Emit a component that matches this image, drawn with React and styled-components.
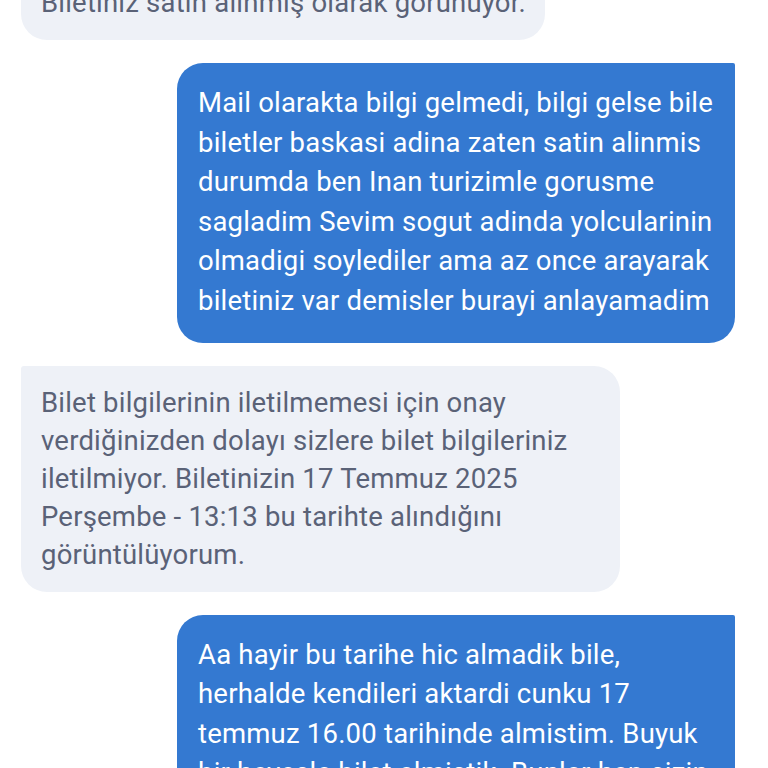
import React from "react";
import styled, { createGlobalStyle, css } from "styled-components";

const Global = createGlobalStyle`
  html, body { margin: 0; padding: 0; background: #ffffff; }
  body { font-family: Roboto, "Noto Sans", "Liberation Sans", sans-serif; overflow: hidden; }
  * { box-sizing: border-box; }
`;

const Screen = styled.div`
  width: 768px;
  height: 768px;
  overflow: hidden;
  background: #ffffff;
`;

const Thread = styled.div`
  display: flex;
  flex-direction: column;
  gap: 23px;
  margin-top: -34px;
`;

const Row = styled.div`
  display: flex;
  justify-content: ${(p) => (p.$mine ? "flex-end" : "flex-start")};
  padding: ${(p) => (p.$mine ? "0 33px 0 0" : "0 0 0 21px")};
`;

const Bubble = styled.div`
  width: ${(p) => p.$w}px;
  font-size: 27.5px;
  letter-spacing: 0.2px;
  white-space: nowrap;
  ${(p) =>
    p.$mine
      ? css`
          background: #3479d1;
          color: #ffffff;
          border-radius: 26px 2px 26px 26px;
          padding: 20px 20px 22px 21px;
          line-height: 39.6px;
        `
      : css`
          background: #eef1f7;
          color: #5a6277;
          border-radius: 3px 26px 26px 26px;
          padding: 18px 20px 18px 20px;
          line-height: 38px;
        `}
`;

const messages = [
  { mine: false, w: 524, lines: ["Biletiniz satın alınmış olarak görünüyor."] },
  {
    mine: true,
    w: 558,
    lines: [
      "Mail olarakta bilgi gelmedi, bilgi gelse bile",
      "biletler baskasi adina zaten satin alinmis",
      "durumda ben Inan turizimle gorusme",
      "sagladim Sevim sogut adinda yolcularinin",
      "olmadigi soylediler ama az once arayarak",
      "biletiniz var demisler burayi anlayamadim",
    ],
  },
  {
    mine: false,
    w: 599,
    lines: [
      "Bilet bilgilerinin iletilmemesi için onay",
      "verdiğinizden dolayı sizlere bilet bilgileriniz",
      "iletilmiyor. Biletinizin 17 Temmuz 2025",
      "Perşembe - 13:13 bu tarihte alındığını",
      "görüntülüyorum.",
    ],
  },
  {
    mine: true,
    w: 558,
    lines: [
      "Aa hayir bu tarihe hic almadik bile,",
      "herhalde kendileri aktardi cunku 17",
      "temmuz 16.00 tarihinde almistim. Buyuk",
      "bir hevesle bilet almistik. Bunlar hep sizin",
    ],
  },
];

export default function App() {
  return (
    <Screen>
      <Global />
      <Thread>
        {messages.map((m, i) => (
          <Row key={i} $mine={m.mine}>
            <Bubble $mine={m.mine} $w={m.w}>
              {m.lines.map((l, j) => (
                <React.Fragment key={j}>
                  {l}
                  {j < m.lines.length - 1 && <br />}
                </React.Fragment>
              ))}
            </Bubble>
          </Row>
        ))}
      </Thread>
    </Screen>
  );
}
